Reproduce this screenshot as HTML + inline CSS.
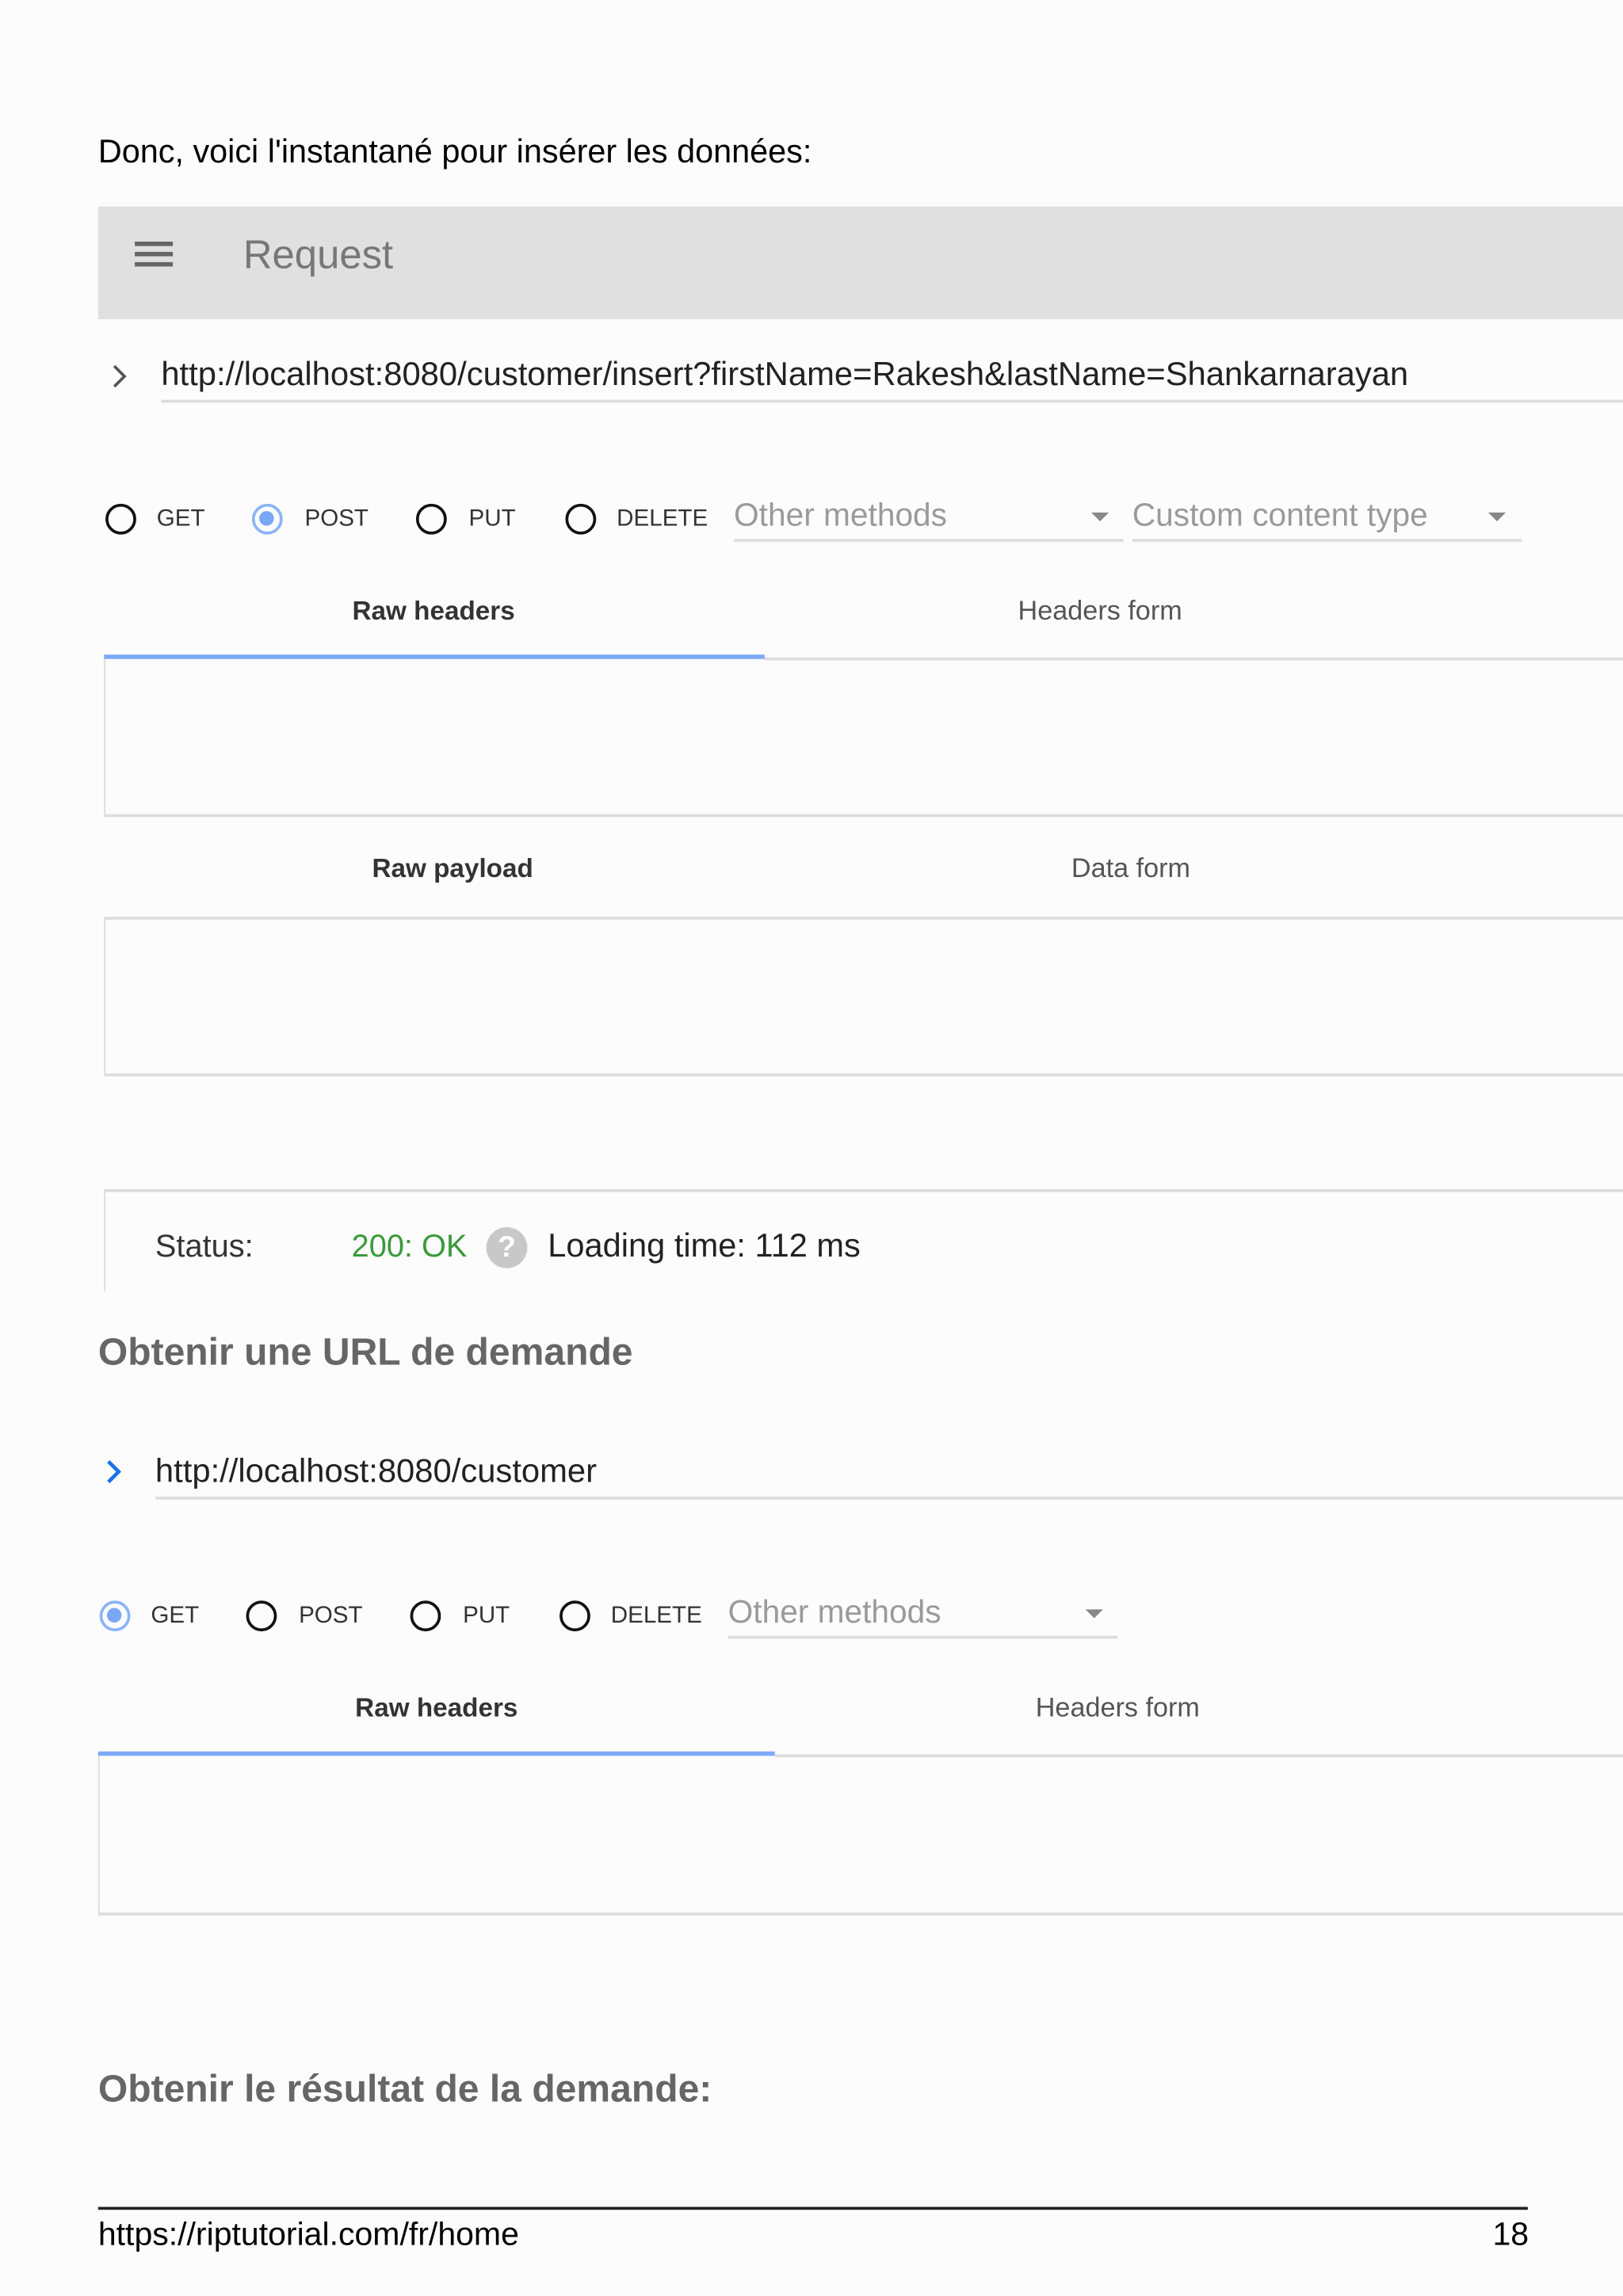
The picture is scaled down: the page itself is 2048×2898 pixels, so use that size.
<!DOCTYPE html>
<html><head><meta charset="utf-8"><style>
html,body{margin:0;padding:0;background:#fff;width:2048px;height:2898px;overflow:hidden}
#s{position:absolute;left:0;top:0;width:1108px;height:1568px;transform:scale(1.84838);transform-origin:0 0;font-family:"Liberation Sans",sans-serif;background:#fdfcfd}
.a{position:absolute;white-space:nowrap;line-height:1}
.r{position:absolute;width:21px;height:21px;border:2.5px solid #111;border-radius:50%;box-sizing:border-box}
.rb{border-color:#8ab4f8}
.rb::after{content:"";position:absolute;left:3px;top:3px;width:10px;height:10px;border-radius:50%;background:#7aa7f3}
.lab{font-size:16px;color:#333}
.sel{font-size:22px;color:#9a9a9a}
.ln{position:absolute;background:#ddd;height:2px}
.tri{position:absolute;width:0;height:0;border-left:6px solid transparent;border-right:6px solid transparent;border-top:6px solid #888}
.tab{font-size:18px;color:#333;font-weight:bold;transform:translateX(-50%)}
.tab2{font-size:18.5px;color:#555;transform:translateX(-50%)}
.h{font-size:26px;font-weight:bold;color:#666}
</style></head><body><div id="s">
<div class="a" style="left:67px;top:93px;font-size:22.4px;color:#000">Donc, voici l'instantané pour insérer les données:</div>
<div style="position:absolute;left:67px;top:141px;width:1041px;height:77px;background:#e0e0e0"></div>
<div style="position:absolute;left:92px;top:165px;width:26px;height:3px;background:#666"></div>
<div style="position:absolute;left:92px;top:172px;width:26px;height:3px;background:#666"></div>
<div style="position:absolute;left:92px;top:179px;width:26px;height:3px;background:#666"></div>
<div class="a" style="left:166px;top:160px;font-size:27.5px;color:#777">Request</div>
<svg style="position:absolute;left:76px;top:249px" width="12" height="16"><path d="M2 1 L9 8 L2 15" fill="none" stroke="#555" stroke-width="2"/></svg>
<div class="a" style="left:110px;top:245px;font-size:22.6px;color:#222">http://localhost:8080/customer/insert?firstName=Rakesh&amp;lastName=Shankarnarayan</div>
<div class="ln" style="left:110px;top:273px;width:998px"></div>

<div class="r" style="left:72px;top:344px"></div><div class="a lab" style="left:107px;top:347px">GET</div>
<div class="r rb" style="left:172px;top:344px"></div><div class="a lab" style="left:208px;top:347px">POST</div>
<div class="r" style="left:284px;top:344px"></div><div class="a lab" style="left:320px;top:347px">PUT</div>
<div class="r" style="left:386px;top:344px"></div><div class="a lab" style="left:421px;top:347px">DELETE</div>
<div class="a sel" style="left:501px;top:341px">Other methods</div><div class="tri" style="left:745px;top:350px"></div><div class="ln" style="left:501px;top:368px;width:266px"></div>
<div class="a sel" style="left:773px;top:341px">Custom content type</div><div class="tri" style="left:1016px;top:350px"></div><div class="ln" style="left:773px;top:368px;width:266px"></div>

<div class="a tab" style="left:296px;top:408px">Raw headers</div>
<div class="a tab2" style="left:751px;top:408px">Headers form</div>
<div style="position:absolute;left:71px;top:447px;width:451px;height:3px;background:#7baaf7"></div>
<div class="ln" style="left:522px;top:449px;width:586px"></div>
<div style="position:absolute;left:71px;top:450px;width:1037px;height:108px;border-left:1px solid #ddd;border-bottom:2px solid #ddd;box-sizing:border-box"></div>

<div class="a tab" style="left:309px;top:584px">Raw payload</div>
<div class="a tab2" style="left:772px;top:584px">Data form</div>
<div style="position:absolute;left:71px;top:626px;width:1037px;height:109px;border-top:2px solid #ddd;border-left:1px solid #ddd;border-bottom:2px solid #ddd;box-sizing:border-box"></div>

<div style="position:absolute;left:71px;top:812px;width:1037px;height:70px;border-top:2px solid #ddd;border-left:1px solid #ddd;box-sizing:border-box"></div>
<div class="a" style="left:106px;top:841px;font-size:21.5px;color:#333">Status:</div>
<div class="a" style="left:240px;top:841px;font-size:21.5px;color:#3a9a3a">200: OK</div>
<div style="position:absolute;left:332px;top:838px;width:28px;height:28px;border-radius:50%;background:#c8c8c8;color:#fff;font-size:20px;font-weight:bold;text-align:center;line-height:28px">?</div>
<div class="a" style="left:374px;top:840px;font-size:22.5px;color:#222">Loading time: 112 ms</div>

<div class="a h" style="left:67px;top:910px">Obtenir une URL de demande</div>

<svg style="position:absolute;left:72px;top:997px" width="12" height="16"><path d="M2 1 L9 8 L2 15" fill="none" stroke="#1a73e8" stroke-width="2.5"/></svg>
<div class="a" style="left:106px;top:994px;font-size:22.6px;color:#222">http://localhost:8080/customer</div>
<div class="ln" style="left:106px;top:1022px;width:1002px"></div>

<div class="r rb" style="left:68px;top:1093px"></div><div class="a lab" style="left:103px;top:1096px">GET</div>
<div class="r" style="left:168px;top:1093px"></div><div class="a lab" style="left:204px;top:1096px">POST</div>
<div class="r" style="left:280px;top:1093px"></div><div class="a lab" style="left:316px;top:1096px">PUT</div>
<div class="r" style="left:382px;top:1093px"></div><div class="a lab" style="left:417px;top:1096px">DELETE</div>
<div class="a sel" style="left:497px;top:1090px">Other methods</div><div class="tri" style="left:741px;top:1099px"></div><div class="ln" style="left:497px;top:1117px;width:266px"></div>

<div class="a tab" style="left:298px;top:1157px">Raw headers</div>
<div class="a tab2" style="left:763px;top:1157px">Headers form</div>
<div style="position:absolute;left:67px;top:1196px;width:462px;height:3px;background:#7baaf7"></div>
<div class="ln" style="left:529px;top:1198px;width:579px"></div>
<div style="position:absolute;left:67px;top:1199px;width:1041px;height:109px;border-left:1px solid #ddd;border-bottom:2px solid #ddd;box-sizing:border-box"></div>

<div class="a h" style="left:67px;top:1413px">Obtenir le résultat de la demande:</div>

<div style="position:absolute;left:67px;top:1507px;width:976px;height:2px;background:#222"></div>
<div class="a" style="left:67px;top:1515px;font-size:22.2px;color:#000">https://riptutorial.com/fr/home</div>
<div class="a" style="left:1019px;top:1515px;font-size:22.2px;color:#000">18</div>
</div></body></html>
